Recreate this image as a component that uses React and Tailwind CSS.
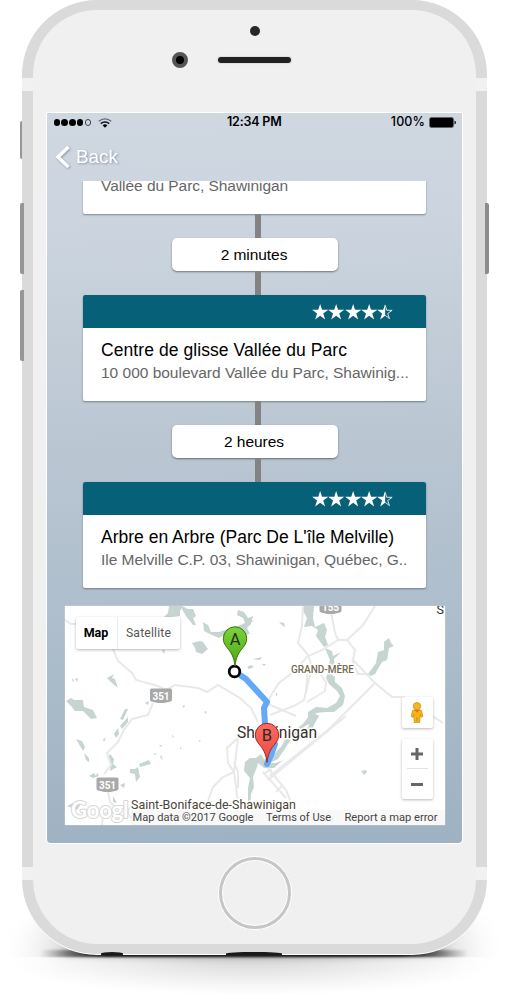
import React from "react";

const HELV = "font-['Liberation_Sans',Arial,sans-serif]";
const STAR = "M8 0 L9.9 5.800 L16 5.800 L11.100 9.500 L13 15.500 L8 11.800 L3 15.500 L4.900 9.500 L0 5.800 L6.100 5.800 Z";

function Stars() {
  return (
    <div className="flex">
      {[0, 1, 2, 3].map((i) => (
        <svg key={i} viewBox="0 0 16 16" className="h-4 w-[16.3px] fill-white">
          <path d={STAR} />
        </svg>
      ))}
      <svg viewBox="0 0 16 16" className="h-4 w-[16.3px]">
        <path d="M8 0 L8 11.800 L3 15.500 L4.900 9.500 L0 5.800 L6.100 5.800 Z" fill="#fff" />
        <path d="M8 1.300 L9.600 6.300 L15 6.300 L10.600 9.500 L12.300 14.600 L8 11.300" fill="none" stroke="#fff" strokeWidth="0.850" />
      </svg>
    </div>
  );
}

function Connector() {
  return (
    <div className="flex h-6 w-full justify-center pl-[8px]">
      <div className="w-[6px] bg-[#838383]" />
    </div>
  );
}

function Duration({ children }) {
  return (
    <div className="ml-px flex h-[33px] w-[166px] items-center justify-center rounded-[5px] bg-white pr-px text-[15.5px] leading-[24px] tracking-[-0.05px] text-black shadow-[0_1px_2px_rgba(0,0,0,0.45)]">
      {children}
    </div>
  );
}

function Place({ title, titleClass, address, addressClass }) {
  return (
    <div className="h-[106px] w-[343px] overflow-hidden rounded-[2px] bg-white shadow-[0_1px_2px_rgba(60,70,80,0.55)]">
      <div className="flex h-[33px] items-center justify-end bg-[#056078] pr-[32px]">
        <Stars />
      </div>
      <div className="pl-[18.5px] pt-[10px]">
        <div className={"whitespace-nowrap leading-[24px] text-black " + titleClass}>{title}</div>
        <div className={"whitespace-nowrap leading-[21px] text-[#666] " + addressClass}>{address}</div>
      </div>
    </div>
  );
}

function Pin({ x, y, from, to, edge, id, letter }) {
  return (
    <g transform={`translate(${x} ${y})`}>
      <defs>
        <linearGradient id={id} x1="0" y1="0" x2="0" y2="1">
          <stop offset="0" stopColor={from} />
          <stop offset="1" stopColor={to} />
        </linearGradient>
      </defs>
      <path
        d="M0 0 C-1.2 -10 -4 -13.5 -8 -18.5 C-10.5 -21.5 -11.7 -24.5 -11.7 -27.5 A11.7 11.7 0 0 1 11.7 -27.5 C11.7 -24.5 10.5 -21.5 8 -18.5 C4 -13.5 1.2 -10 0 0 Z"
        fill={`url(#${id})`}
        stroke={edge}
        strokeWidth="1"
      />
      <text y="-21.5" textAnchor="middle" fontSize="16.5" fill="#2b2b20">{letter}</text>
    </g>
  );
}

function Shield({ x, y, children }) {
  return (
    <g transform={`translate(${x} ${y})`}>
      <path d="M0 1.5 Q0 0 1.5 0 H20.5 Q22 0 22 1.5 V11 Q22 12.5 20.5 13 L14 14.5 H8 L1.5 13 Q0 12.5 0 11 Z" fill="#a9a9a9" />
      <text x="11" y="11" textAnchor="middle" fontSize="10" fontWeight="700" fill="#fff">{children}</text>
    </g>
  );
}

function MapArt() {
  return (
    <svg viewBox="65 606 380 219" className="block h-[219px] w-[380px] font-['Roboto',sans-serif]">
      <g fill="#c6d5d2">
        <path d="M169 606h14l-3 5 0 5-9 1-7 0 4-4z" />
        <path d="M182 606l6 3 5 0 3 7-3 2 3 7-3 0-7-9-4-7z" />
        <path d="M203 622l5 3 3 7 8 0 12-4 6 2-9 3-9 5-7-3-8-4z" />
        <path d="M238 610l6 2 4 6 5-2-2 8-4 4 3 6-12 1-5-7 12-5-2-5-6-3z" />
        <path d="M192 643l8-2 3 1 5 7-6 5-6-2-1-4z" />
        <path d="M162 650l3 0-1 4zM72 678l2 2-1 3zM75 679l3-1-1 4z" />
        <path d="M107 678l7-4-2 4 3 1 3 9-5-4zM247 667l4-2 3 2-5 2zM253 659l9-2-2 3z" />
        <path d="M66 701l5-3 3 2 9 0 1 7 9 3 4 8-6 1-8-8-8 0-3-4z" />
        <path d="M120 719l5-10 3 0-5 11zM145 703l4-2-1 4zM182 706l3-1-1 3zM204 712l2-1 1 3z" />
        <path d="M303 606h11l-1 12 2 9 9-4 3 7-2 7 3 8-4 2-8-11 2-6-6-4-8 1 3-9-5-9z" />
        <path d="M325 648l7 3 1 5 8-4-7 7 1 10-4 4-3-6 2-7z" />
        <path d="M384 642l5-4 2 5 3 3-5 2-2 12-5 2-7 12-4 2-3-2 8-11 2-11 6-2z" />
        <path d="M279 622l4 4 2 1-1-4zM250 620l4 1-3 1zM262 664l4 0-2 2z" />
        <path d="M328 672l7 5 0 5 7 6 3 8-2 9-9 7-8 0-10 1-3 6-5-1 0-6 8-5 11 1 9-5 4-7-3-5-8-7-3-6z" />
        <path d="M314 713l5 3-4 7-3 6-7 4 4-8z" />
        <path d="M309 716l6 0-1 6-9 4-7 8-7 5-5 8-8 12-8 4-7-3 9-4 9-9 5-9 8-8 9-6z" />
        <path d="M76 739l6 2 3 6-2 4zM84 753l5 5 0 4-3-2zM114 734l4-6 1 6-3 4zM120 726l8-9 0 5-6 7zM103 739l3-1-2 4z" />
        <path d="M110 754l4 5-1 5 4 3-7 4 1-8-3-5zM130 769l5 0 3-2 1 6 1 4-4 5-1-8-5-1zM139 764l10-4 2 4-11 3zM153 755l2-2 2 1zM161 755l2 5-3-3z" />
        <path d="M89 776l5-3 2 3 1-3 2 3-6 2zM120 785l5-2-1 5zM113 796l4 7-4-1zM67 806l6-3 8 1-4 6zM172 734l2 3-1 1zM199 740l2 1-2 1zM180 747l2 2-2 0zM159 745l3 0-1 2z" />
        <path d="M245 762l5-4 9 0-2 9-4 10 1 10-3 7-1 13-2 0 0-19 2-10-6-7z" />
        <path d="M253 760l8-6 5 9 10 0 7-3-9 8-10 0-6-5-4 4zM361 771l5-1 1 2-3 3zM276 693l2 1-2 2z" />
      </g>
      <g fill="none" stroke="#e9e9e9" strokeWidth="2">
        <path d="M65 620l6 4 8 0M113 649l5 12 14 12 4 7 22 6 8 4 9-5 23 3 9 4 11-7 22 13 11 10 7 14" />
        <path d="M153 703l-5 12-16 4-8 11-6 12-11 11 4 12-7 9M108 792l2 10 6 5-13 8-1 10" />
        <path d="M238 738l-11 10 1 15 6 9-11 5-10 10-5 14M238 738l-4 34 4 30-2 23M234 762l4 10 0 16" />
        <path d="M375 606l-12 19-16 15 8 10-2 10 22 23 17 14 12 0 39 26M330 606l5 27 3 7 9 0M338 640l-16 10-14 6-16 17-13 10-9 14-2 8" />
        <path d="M303 606l-1 20-4 17 10 12 4 12-8 33-10 6-24 9M308 666l-2 25M268 704l28 12M321 675l5 7-1 9-8 5-10 6" />
        <path d="M375 683l-47 47-38 30-20 16M346 716l-78 64M352 660l6 14 10 0" />
        <path d="M263 772l23 26M268 768l18 22 4 10M263 774l9-5M276 792l6-6" />
      </g>
      <path d="M234 671 L246 679 L267 702 L264 708 L265 725 L268 736 L273 742 L275 744 L271 755 L267 764" fill="none" stroke="#62a9f8" strokeWidth="6" strokeLinejoin="round" strokeLinecap="round" />
      <Shield x="150" y="688.5">351</Shield>
      <Shield x="96.5" y="777.5">351</Shield>
      <Shield x="319.5" y="599.5">155</Shield>
      <g stroke="#fff" strokeWidth="3" strokeLinejoin="round" style={{ paintOrder: "stroke" }}>
        <text x="291" y="672.5" fontSize="10" fontWeight="500" fill="#756a51" textLength="63" lengthAdjust="spacingAndGlyphs">GRAND-MÈRE</text>
        <text x="436.5" y="614" fontSize="12.5" fill="#333">S</text>
        <text x="237" y="738.3" fontSize="16.5" fill="#33302a" textLength="80" lengthAdjust="spacingAndGlyphs">Shawinigan</text>
      </g>
      <circle cx="234.5" cy="671.5" r="5.3" fill="#fff" stroke="#000" strokeWidth="2.8" />
      <Pin id="pinA" x={235} y={666} from="#7ed33c" to="#4aa80e" edge="#35730d" letter="A" />
      <Pin id="pinB" x={267} y={762.5} from="#ff6a62" to="#e64b43" edge="#a52722" letter="B" />
      <text x="71" y="817.5" fontSize="22" fontWeight="700" fill="#fff" stroke="#d6d6d6" strokeWidth="2" strokeLinejoin="round" className="font-['Lato',sans-serif]" textLength="69" style={{ paintOrder: "stroke" }}>Google</text>
      <rect x="131" y="810" width="314" height="15" fill="#f7f7f7" opacity="0.9" />
      <text x="131" y="808.5" fontSize="12.8" fill="#4b4538" stroke="#fff" strokeWidth="3" strokeLinejoin="round" textLength="165" lengthAdjust="spacingAndGlyphs" style={{ paintOrder: "stroke" }}>Saint-Boniface-de-Shawinigan</text>
      <g fontSize="11.5" fill="#444">
        <text x="132.5" y="821" textLength="121" lengthAdjust="spacingAndGlyphs">Map data ©2017 Google</text>
        <text x="266" y="821" textLength="65" lengthAdjust="spacingAndGlyphs">Terms of Use</text>
        <text x="344.5" y="821" textLength="93" lengthAdjust="spacingAndGlyphs">Report a map error</text>
      </g>
    </svg>
  );
}

function Pegman() {
  return (
    <svg viewBox="0 0 14 22" className="h-[22px] w-[14px]">
      <g fill="#f7b516" stroke="#c98a0d" strokeWidth="0.7">
        <path d="M2.5 8.5 Q7 6.5 11.5 8.5 L12.8 14.5 L11 15.2 L10.2 12.5 L9.8 20.5 H7.5 L7 15.5 L6.5 20.5 H4.2 L3.8 12.5 L3 15.2 L1.2 14.5 Z" />
        <circle cx="7" cy="4.2" r="3.7" />
      </g>
      <path d="M4.3 8 L7 10.8 L9.7 8 Z" fill="#ef6c1a" />
    </svg>
  );
}

function MapPanel() {
  return (
    <div className="relative h-[219px] w-[380px] overflow-hidden bg-white font-['Roboto',sans-serif] shadow-[0_0_1px_rgba(255,255,255,0.8)]">
      <MapArt />
      <div className="absolute left-[11px] top-[11px] flex h-[32px] rounded-[2px] bg-white text-[12px] leading-[32px] shadow-[0_1px_3px_rgba(0,0,0,0.28)]">
        <div className="w-[42px] border-r border-[#ececec] text-center text-[12.5px] font-bold text-black">Map</div>
        <div className="w-[62px] text-center text-[12.2px] tracking-[0.15px] text-[#565656]">Satellite</div>
      </div>
      <div className="absolute right-[12px] top-[91px] flex w-[31px] flex-col gap-[11px]">
        <div className="flex h-[31px] items-center justify-center rounded-[2px] bg-white shadow-[0_1px_3px_rgba(0,0,0,0.28)]">
          <Pegman />
        </div>
        <div className="flex h-[60px] flex-col items-center rounded-[2px] bg-white shadow-[0_1px_3px_rgba(0,0,0,0.28)]">
          <div className="flex h-[29px] items-center">
            <svg viewBox="0 0 12 12" className="h-3 w-3 fill-[#666]"><path d="M4.500 0h3v4.500H12v3H7.500V12h-3V7.500H0v-3h4.500z" /></svg>
          </div>
          <div className="h-px w-[21px] bg-[#e3e3e3]" />
          <div className="flex h-[30px] items-center">
            <div className="h-[3px] w-3 bg-[#666]" />
          </div>
        </div>
      </div>
    </div>
  );
}

function StatusBar() {
  return (
    <div className="grid h-[19px] grid-cols-3 items-center pl-[6.5px] pr-[6px] font-['Inter',sans-serif] text-[12.5px] font-medium text-black">
      <div className="flex items-center gap-[1.2px]">
        {[0, 1, 2, 3].map((i) => (
          <div key={i} className="h-[6.6px] w-[6.6px] rounded-full bg-black" />
        ))}
        <div className="h-[6.6px] w-[6.6px] rounded-full border border-[#444]" />
        <svg viewBox="0 0 14 10" className="ml-[6px] h-[10px] w-[14px]">
          <path d="M0.800 3.300 A9.300 9.300 0 0 1 13.200 3.300" fill="none" stroke="#667" strokeWidth="1.300" />
          <path d="M2.800 5.600 A6.200 6.200 0 0 1 11.200 5.600" fill="none" stroke="#111" strokeWidth="1.500" />
          <path d="M4.600 7.300 A3.800 3.800 0 0 1 9.400 7.300 L7 9.800 Z" fill="#000" />
        </svg>
      </div>
      <div className="whitespace-nowrap pr-px text-center font-semibold tracking-[-0.2px]">12:34 PM</div>
      <div className="flex items-center justify-end gap-[4px]">
        <span className="tracking-[0.1px]">100%</span>
        <svg viewBox="0 0 27 11" className="h-[11px] w-[27px]">
          <rect x="0.500" y="0.500" width="24" height="10" rx="2" fill="#000" stroke="#5e6269" />
          <path d="M25.500 3.500 Q27 4 27 5.500 Q27 7 25.500 7.500 Z" fill="#111" />
        </svg>
      </div>
    </div>
  );
}

function Screen() {
  return (
    <div className={"mx-[14px] flex h-[730px] w-[415px] flex-col overflow-hidden rounded-b-[3px] bg-[linear-gradient(178deg,#cfd7e1_0%,#ccd5df_15%,#bbc7d3_43%,#adbdcb_70%,#9fb2c2_100%)] outline outline-white " + HELV}>
      <StatusBar />
      <div className="flex h-[49px] items-center gap-[6px] pl-[9px] text-[19px] text-white drop-shadow-[1px_1px_1px_rgba(90,105,125,0.55)]">
        <svg viewBox="0 0 14 22" className="mt-px h-[22px] w-[14px]">
          <path d="M12.500 1 L2 11 L12.500 21" fill="none" stroke="#fff" strokeWidth="3.400" />
        </svg>
        <span className="mt-px tracking-[-0.1px]">Back</span>
      </div>
      <div className="flex flex-1 flex-col items-center overflow-hidden pr-px">
        <div className="h-[33px] w-[343px] shrink-0 rounded-b-[2px] bg-white pl-[18.5px] text-[15.5px] leading-[10px] text-[#666] shadow-[0_1px_2px_rgba(60,70,80,0.55)]">
          <span className="tracking-[-0.05px]">Vallée du Parc, Shawinigan</span>
        </div>
        <Connector />
        <Duration>2 minutes</Duration>
        <Connector />
        <Place
          title="Centre de glisse Vallée du Parc"
          titleClass="text-[17.5px] tracking-[0.07px]"
          address="10 000 boulevard Vallée du Parc, Shawinig..."
          addressClass="text-[15.5px] tracking-[-0.01px]"
        />
        <Connector />
        <Duration>2 heures</Duration>
        <Connector />
        <Place
          title="Arbre en Arbre (Parc De L'île Melville)"
          titleClass="text-[17.5px]"
          address="Ile Melville C.P. 03, Shawinigan, Québec, G.."
          addressClass="text-[15.5px] tracking-[-0.02px]"
        />
        <div className="ml-px mt-[18px]">
          <MapPanel />
        </div>
      </div>
    </div>
  );
}

export default function App() {
  return (
    <div className="relative h-[999px] w-[508px] overflow-hidden bg-white pl-[22px]">
      <div className="absolute left-[0px] top-[870px] h-[87px] w-[508px] bg-[radial-gradient(ellipse_52%_100%_at_50%_100%,#d0d0d0_0%,#d6d6d6_65%,#ececec_85%,#ffffff_100%)]" />
      <div className="absolute left-[0px] top-[957px] h-[42px] w-[508px] bg-[radial-gradient(ellipse_52%_92%_at_50%_0%,#d6d6d6_0%,#e0e0e0_25%,#ececec_50%,#f9f9f9_80%,#ffffff_100%)]" />
      <div className="absolute left-[0px] top-[870px] h-[129px] w-[60px] bg-[linear-gradient(to_right,#fff_10%,rgba(255,255,255,0.6)_50%,rgba(255,255,255,0)_100%)]" />
      <div className="absolute right-[0px] top-[870px] h-[129px] w-[60px] bg-[linear-gradient(to_left,#fff_10%,rgba(255,255,255,0.6)_50%,rgba(255,255,255,0)_100%)]" />
      <div className="absolute left-[60px] top-[947px] h-[8px] w-[388px] rounded-[50%] bg-[#555] blur-[4px]" />
      <div className="absolute left-[40px] top-[950px] h-[7px] w-[428px] bg-[linear-gradient(to_right,rgba(20,20,20,0)_0%,rgba(20,20,20,0.75)_11%,#151515_16%,#151515_84%,rgba(20,20,20,0.75)_89%,rgba(20,20,20,0)_100%)] blur-[1px]" />
      <div className="absolute left-[20px] top-[121px] h-[38px] w-[4px] rounded-l-[2px] bg-[#969696]" />
      <div className="relative flex h-[954px] w-[465px] flex-col overflow-hidden rounded-[75px] border-x-[11px] border-y-[10px] border-[#dadada] bg-[#f0f0f0] shadow-[0_1px_0_0_#fff]">
        <div className="flex h-[103px] shrink-0 flex-col">
          <div className="flex justify-center pt-[16px]">
            <div className="h-[10px] w-[10px] rounded-full bg-[#26272c]" />
          </div>
          <div className="mt-[15.5px] flex h-[17px] items-center gap-[30px] pl-[139px]">
            <div className="h-[16px] w-[16px] rounded-full border-[4px] border-[#555] bg-black" />
            <div className="h-[6px] w-[73px] rounded-full bg-[#202121] shadow-[0_0_1px_1px_#ddd]" />
          </div>
        </div>
        <Screen />
        <div className="flex flex-1 justify-center pt-[14px]">
          <div className="h-[72px] w-[72px] rounded-full border-[3px] border-[#c4c6c8] shadow-[0_0_0_1px_#fff,inset_0_0_0_1px_#fff]" />
        </div>
      </div>
      <div className="absolute left-[22px] top-[78px] h-[13px] w-[11px] bg-[#f1f1f1]" />
      <div className="absolute left-[476px] top-[78px] h-[13px] w-[11px] bg-[#f1f1f1]" />
      <div className="absolute left-[22px] top-[867px] h-[13px] w-[11px] bg-[#f1f1f1]" />
      <div className="absolute left-[476px] top-[867px] h-[13px] w-[11px] bg-[#f1f1f1]" />
      <div className="absolute left-[20px] top-[203px] h-[71px] w-[4px] rounded-l-[2px] bg-[#969696]" />
      <div className="absolute left-[20px] top-[290px] h-[71px] w-[4px] rounded-l-[2px] bg-[#969696]" />
      <div className="absolute left-[485px] top-[203px] h-[71px] w-[4px] rounded-r-[2px] bg-[#8c8c8c]" />
      <div className="absolute left-[101px] top-[952px] h-[3px] w-[22px] rounded-t-[50%] bg-[#1a1a1a]" />
      <div className="absolute left-[226px] top-[952px] h-[3px] w-[56px] rounded-t-[50%] bg-[#1a1a1a]" />
    </div>
  );
}
